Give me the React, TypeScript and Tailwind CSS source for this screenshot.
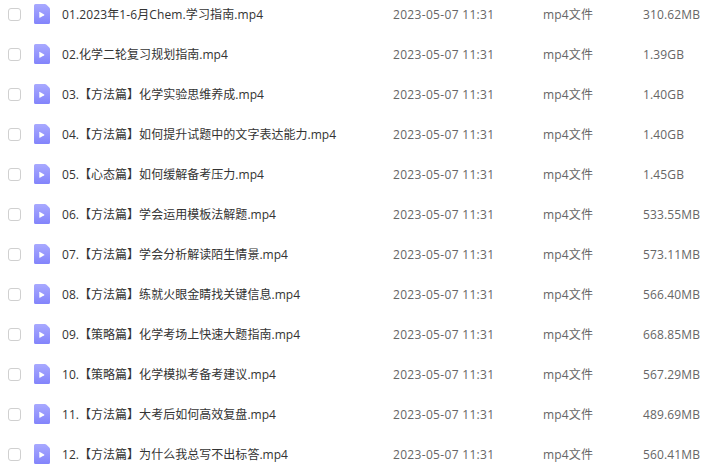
import React from 'react';

const files = [
  { name: '01.2023年1-6月Chem.学习指南.mp4', size: '310.62MB' },
  { name: '02.化学二轮复习规划指南.mp4', size: '1.39GB' },
  { name: '03.【方法篇】化学实验思维养成.mp4', size: '1.40GB' },
  { name: '04.【方法篇】如何提升试题中的文字表达能力.mp4', size: '1.40GB' },
  { name: '05.【心态篇】如何缓解备考压力.mp4', size: '1.45GB' },
  { name: '06.【方法篇】学会运用模板法解题.mp4', size: '533.55MB' },
  { name: '07.【方法篇】学会分析解读陌生情景.mp4', size: '573.11MB' },
  { name: '08.【方法篇】练就火眼金睛找关键信息.mp4', size: '566.40MB' },
  { name: '09.【策略篇】化学考场上快速大题指南.mp4', size: '668.85MB' },
  { name: '10.【策略篇】化学模拟考备考建议.mp4', size: '567.29MB' },
  { name: '11.【方法篇】大考后如何高效复盘.mp4', size: '489.69MB' },
  { name: '12.【方法篇】为什么我总写不出标答.mp4', size: '560.41MB' },
];

const VideoIcon = () => (
  <svg width="16" height="20" viewBox="0 0 16 20" className="shrink-0">
    <defs>
      <linearGradient id="video-fill" x1="0" y1="0" x2="0" y2="1">
        <stop offset="0" stopColor="#a8a9ff" />
        <stop offset="1" stopColor="#8384fb" />
      </linearGradient>
    </defs>
    <path d="M1.500 0H10.800q1 0 1.700.7l2.800 2.800q.7.7.7 1.700v13.300a1.500 1.500 0 0 1-1.500 1.500h-13A1.500 1.500 0 0 1 0 18.500v-17A1.500 1.500 0 0 1 1.500 0z" fill="url(#video-fill)" />
    <path d="M5.300 8.300v5q0 .7.600.4l4.300-2.400q.5-.4 0-.8L5.900 7.900q-.6-.3-.6.4z" fill="#fff" />
  </svg>
);

export default function App() {
  return (
    <div className="h-[469px] w-[709px] overflow-hidden bg-white font-['Open_Sans','Noto_Sans_CJK_SC',sans-serif] text-xs text-[#666]">
      <ul className="-mt-1.5">
        {files.map((file, i) => (
          <li key={file.name} className="flex h-10 items-center whitespace-nowrap pl-2">
            <span className="mt-px mr-[13px] size-[13px] shrink-0 rounded-[3px] border border-[#d0d0d0] bg-white" />
            <VideoIcon />
            <span className={`ml-3 w-[331px] shrink-0 pt-0.5 text-[#333] ${i === 0 ? 'tracking-[0.12px]' : 'tracking-[0.03px]'}`}>
              {file.name}
            </span>
            <span className="w-[150px] shrink-0 pt-0.5 tracking-[0.32px]">2023-05-07 11:31</span>
            <span className="w-[100px] shrink-0 pt-0.5 tracking-[0.15px]">mp4文件</span>
            <span className="pt-0.5 tracking-[0.15px]">{file.size}</span>
          </li>
        ))}
      </ul>
    </div>
  );
}
